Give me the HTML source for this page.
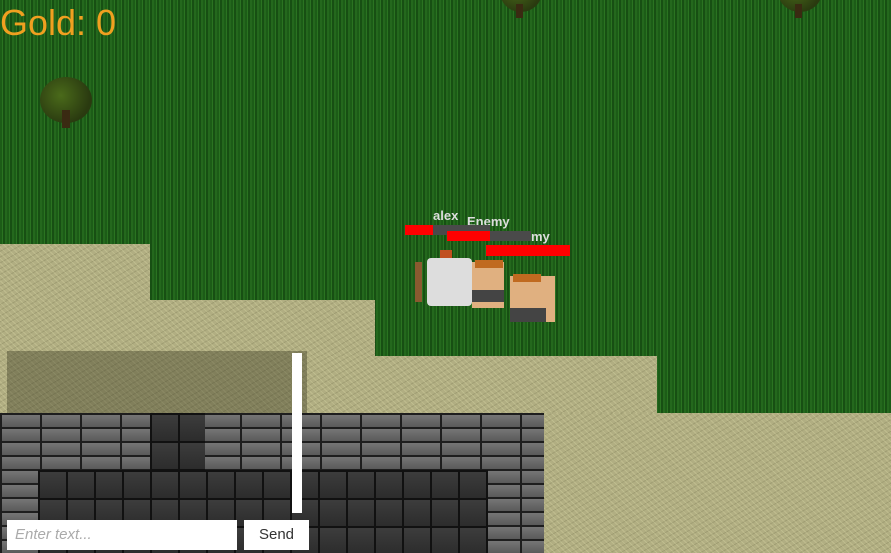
<!DOCTYPE html>
<html><head><style>
body{margin:0;width:891px;height:553px;overflow:hidden;position:relative;background:#1f611a;font-family:"Liberation Sans",sans-serif}
div{position:absolute}
.grass{inset:0;background:repeating-linear-gradient(90deg,#1c5c17 0 2px,#2a7321 2px 3px,#174f13 3px 5px,#24681d 5px 7px),#1f611a}
.sand{background:#b1ae82;background-image:repeating-linear-gradient(45deg,rgba(255,255,200,.18) 0 1px,transparent 1px 4px),repeating-linear-gradient(-30deg,rgba(60,60,30,.15) 0 1px,transparent 1px 5px)}
.stone{background-color:#2a2a2a;background-image:linear-gradient(#1e1e1e 0 2px,transparent 2px),linear-gradient(90deg,#1e1e1e 0 2px,transparent 2px),linear-gradient(#7a7a7a,#5a5a5a);background-size:40px 14px,40px 28px,40px 14px}
.dark{background-color:#1a1a1a;background-image:linear-gradient(#111 0 2px,transparent 2px),linear-gradient(90deg,#111 0 2px,transparent 2px),linear-gradient(#3e3e3e,#2c2c2c);background-size:28px 28px,28px 28px,28px 28px}
.tree{border-radius:50%;background:radial-gradient(circle at 40% 40%,#4a6a1a,#2a3a10 70%)}
.lbl{color:#ddd;font-size:13px;font-weight:bold}
</style></head><body>
<div class="grass"></div>
<div class="sand" style="left:0;top:244px;width:150px;height:60px"></div>
<div class="sand" style="left:0;top:300px;width:375px;height:60px"></div>
<div class="sand" style="left:0;top:356px;width:657px;height:60px"></div>
<div class="sand" style="left:0;top:413px;width:891px;height:140px"></div>
<div class="stone" style="left:0;top:413px;width:544px;height:140px"></div>
<div class="dark" style="left:150px;top:413px;width:55px;height:57px"></div>
<div class="dark" style="left:38px;top:470px;width:450px;height:83px"></div>
<div class="tree" style="left:40px;top:77px;width:52px;height:46px"></div>
<div style="left:62px;top:110px;width:8px;height:18px;background:#3a2a12"></div>
<div class="tree" style="left:500px;top:-28px;width:42px;height:40px"></div>
<div style="left:516px;top:4px;width:7px;height:14px;background:#3a2a12"></div>
<div class="tree" style="left:778px;top:-28px;width:44px;height:40px"></div>
<div style="left:795px;top:4px;width:7px;height:14px;background:#3a2a12"></div>
<div style="left:0;top:2px;font-size:36px;color:#f0a020">Gold: 0</div>
<div style="left:7px;top:351px;width:300px;height:62px;background:rgba(40,40,20,.35)"></div>
<div style="left:292px;top:353px;width:10px;height:160px;background:#fff"></div>
<div style="left:7px;top:520px;width:230px;height:30px;background:#fff;color:#aaa;font-style:italic;font-size:15px;line-height:30px;box-sizing:border-box;padding-left:8px">Enter text...</div>
<div style="left:244px;top:520px;width:65px;height:30px;background:#fff;color:#333;font-size:15px;line-height:30px;text-align:center">Send</div>
<div class="lbl" style="left:433px;top:208px">alex</div>
<div class="lbl" style="left:467px;top:214px">Enemy</div>
<div class="lbl" style="left:531px;top:229px">my</div>
<div style="left:405px;top:225px;width:28px;height:10px;background:#f00"></div>
<div style="left:433px;top:225px;width:57px;height:10px;background:#4a4a4a"></div>
<div style="left:447px;top:231px;width:43px;height:10px;background:#f00"></div>
<div style="left:490px;top:231px;width:41px;height:10px;background:#4a4a4a"></div>
<div style="left:486px;top:245px;width:84px;height:11px;background:#f00"></div>
<div style="left:415px;top:262px;width:7px;height:40px;background:#8a5a30"></div>
<div style="left:440px;top:250px;width:12px;height:8px;background:#c05020"></div>
<div style="left:427px;top:258px;width:45px;height:48px;background:#ddd;border-radius:4px"></div>
<div style="left:472px;top:262px;width:32px;height:46px;background:#e0b080"></div>
<div style="left:475px;top:260px;width:28px;height:8px;background:#c06a20"></div>
<div style="left:472px;top:290px;width:32px;height:12px;background:#444"></div>
<div style="left:510px;top:276px;width:45px;height:46px;background:#e0b080"></div>
<div style="left:513px;top:274px;width:28px;height:8px;background:#c06a20"></div>
<div style="left:510px;top:308px;width:36px;height:14px;background:#444"></div>
</body></html>
